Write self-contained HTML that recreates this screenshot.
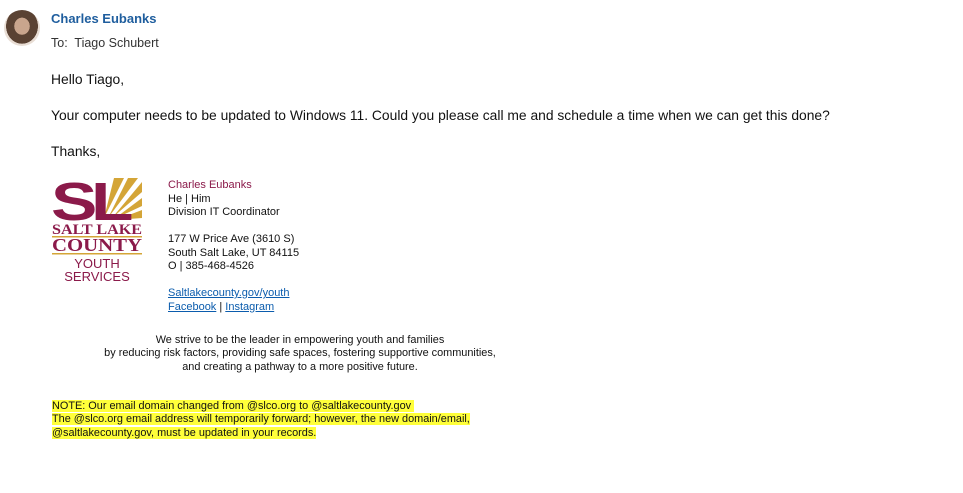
<html><head><style>
body{margin:0;background:#fff;font-family:"Liberation Sans",sans-serif;width:963px;height:493px;position:relative;overflow:hidden}
.a{position:absolute;white-space:nowrap}
.s{font-size:11px;color:#111;line-height:13.5px}
a{color:#0b5cad;text-decoration:underline}
.hl{background:#ffff3a}
</style></head><body>
<div class="a" style="left:4px;top:10px;width:36px;height:36px;border-radius:50%;background:radial-gradient(ellipse at 50% 45%,#c9a58d 0 30%,#5a4233 31% 62%,#e8ddd4 63%)"></div>
<div class="a" style="left:51px;top:11px;font-size:13px;font-weight:bold;color:#1f5e9e">Charles Eubanks</div>
<div class="a" style="left:51px;top:36px;font-size:12.5px;color:#333">To:&nbsp; Tiago Schubert</div>
<div class="a" style="left:51px;top:71px;font-size:13.85px;color:#111">Hello Tiago,</div>
<div class="a" style="left:51px;top:107px;font-size:13.85px;color:#111">Your computer needs to be updated to Windows 11. Could you please call me and schedule a time when we can get this done?</div>
<div class="a" style="left:51px;top:143px;font-size:13.85px;color:#111">Thanks,</div>
<svg class="a" style="left:52px;top:178px" width="92" height="106" viewBox="0 0 92 106">
<g fill="#d4a537"><polygon points="52,40 62,0 72,0"/><polygon points="56,40 76,0 86,0"/><polygon points="60,40 90,4 90,14"/><polygon points="62,41 90,20 90,28"/><polygon points="64,42 90,32 90,40"/></g>
<text x="-1" y="42" font-family="Liberation Sans" font-weight="bold" font-size="54" fill="#8b1a4a" letter-spacing="-5" textLength="76" lengthAdjust="spacingAndGlyphs">SL</text>
<text x="0" y="56" font-family="Liberation Serif" font-weight="bold" font-size="15" fill="#8b1a4a" textLength="90" lengthAdjust="spacingAndGlyphs">SALT LAKE</text>
<rect x="0" y="58" width="90" height="1.5" fill="#d4a537"/>
<text x="0" y="73" font-family="Liberation Serif" font-weight="bold" font-size="18" fill="#8b1a4a" textLength="90" lengthAdjust="spacingAndGlyphs">COUNTY</text>
<rect x="0" y="75" width="90" height="1.5" fill="#d4a537"/>
<text x="45" y="90" text-anchor="middle" font-family="Liberation Sans" font-size="13" fill="#8b1a4a">YOUTH</text>
<text x="45" y="103" text-anchor="middle" font-family="Liberation Sans" font-size="13" fill="#8b1a4a">SERVICES</text>
</svg>
<div class="a s" style="left:168px;top:179px"><span style="color:#8b1a4a">Charles Eubanks</span><br>He | Him<br>Division IT Coordinator<br><br>177 W Price Ave (3610 S)<br>South Salt Lake, UT 84115<br>O | 385-468-4526<br><br><a>Saltlakecounty.gov/youth</a><br><a>Facebook</a> | <a>Instagram</a></div>
<div class="a s" style="left:100px;top:334px;width:400px;text-align:center;font-size:10.9px;line-height:13.3px">We strive to be the leader in empowering youth and families<br>by reducing risk factors, providing safe spaces, fostering supportive communities,<br>and creating a pathway to a more positive future.</div>
<div class="a s" style="left:52px;top:400px;font-size:10.9px;line-height:13.3px"><span class="hl">NOTE: Our email domain changed from @slco.org to @saltlakecounty.gov&nbsp;</span><br><span class="hl">The @slco.org email address will temporarily forward; however, the new domain/email,</span><br><span class="hl">@saltlakecounty.gov, must be updated in your records.</span></div>
</body></html>
